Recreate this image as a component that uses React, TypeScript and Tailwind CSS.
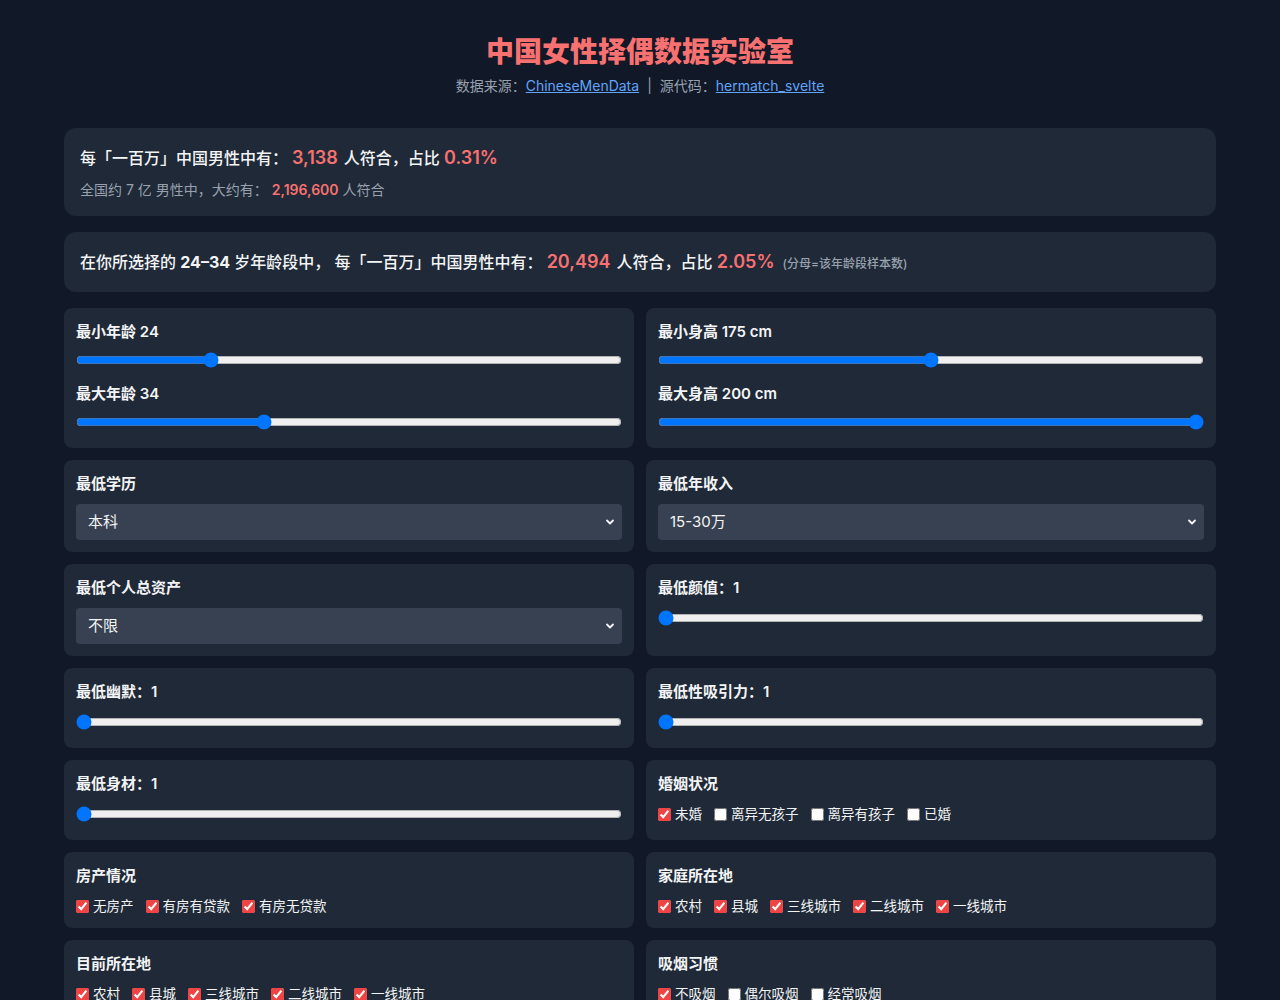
import { useState } from "react";

type Opt = { label: string; checked: boolean };

const Card = ({ children }: { children: React.ReactNode }) => (
  <div className="bg-[#1f2937] rounded-lg p-3">{children}</div>
);

const RangeField = ({
  label,
  value,
  min,
  max,
  onChange,
  tight = false,
}: {
  label: string;
  value: number;
  min: number;
  max: number;
  onChange: (v: number) => void;
  tight?: boolean;
}) => (
  <div>
    <div className="text-[15px] leading-6 font-semibold text-gray-100">{label}</div>
    <input
      type="range"
      min={min}
      max={max}
      value={value}
      onChange={(e) => onChange(Number(e.target.value))}
      className={`block w-full mx-0 mb-[6px] ${tight ? "mt-2" : "mt-2.5"}`}
    />
  </div>
);

const SelectField = ({ label, options, value }: { label: string; options: string[]; value: string }) => {
  const [v, setV] = useState(value);
  return (
    <div>
      <div className="text-[15px] leading-6 font-semibold text-gray-100">{label}</div>
      <div className="relative mt-2">
        <select
          value={v}
          onChange={(e) => setV(e.target.value)}
          className="appearance-none w-full h-9 bg-[#374151] rounded px-3 text-[15px] text-gray-100 outline-none"
        >
          {options.map((o) => (
            <option key={o}>{o}</option>
          ))}
        </select>
        <svg
          className="absolute right-[7px] top-1/2 -translate-y-1/2 pointer-events-none"
          width="10"
          height="10"
          viewBox="0 0 10 10"
        >
          <path d="M2 3.5 L5 6.5 L8 3.5" stroke="#f3f4f6" strokeWidth="1.8" fill="none" strokeLinecap="round" strokeLinejoin="round" />
        </svg>
      </div>
    </div>
  );
};

const CheckGroup = ({ label, options }: { label: string; options: Opt[] }) => {
  const [items, setItems] = useState(options);
  return (
    <div>
      <div className="text-[15px] leading-6 font-semibold text-gray-100">{label}</div>
      <div className="flex flex-wrap gap-x-3 gap-y-1 mt-2">
        {items.map((o, i) => (
          <label key={o.label} className="flex items-center gap-1 text-[13.5px] leading-5 text-gray-100">
            <input
              type="checkbox"
              checked={o.checked}
              onChange={() => setItems(items.map((it, j) => (j === i ? { ...it, checked: !it.checked } : it)))}
              className="m-0 w-[13px] h-[13px] accent-[#ef4444]"
            />
            {o.label}
          </label>
        ))}
      </div>
    </div>
  );
};

const cities = ["农村", "县城", "三线城市", "二线城市", "一线城市"];

export default function App() {
  const [minAge, setMinAge] = useState(24);
  const [maxAge, setMaxAge] = useState(34);
  const [minHeight, setMinHeight] = useState(175);
  const [maxHeight, setMaxHeight] = useState(200);
  const [looks, setLooks] = useState(1);
  const [humor, setHumor] = useState(1);
  const [appeal, setAppeal] = useState(1);
  const [body, setBody] = useState(1);

  return (
    <div className="min-h-screen bg-[#111827] text-gray-100 font-[Inter,'Noto_Sans_CJK_SC',sans-serif] pt-[34px] pb-12">
      <div className="max-w-6xl mx-auto">
        <header className="text-center">
          <h1 className="text-[28px] leading-9 font-extrabold text-[#f87171]">中国女性择偶数据实验室</h1>
          <p className="mt-1.5 text-sm leading-5 text-gray-400">
            数据来源：
            <a href="#" className="text-[#60a5fa] underline">
              ChineseMenData
            </a>
            <span className="mx-2">|</span>
            源代码：
            <a href="#" className="text-[#60a5fa] underline">
              hermatch_svelte
            </a>
          </p>
        </header>

        <div className="mt-8 bg-[#1f2937] rounded-xl px-4 py-4">
          <p className="text-base leading-7 font-medium text-gray-100">
            每「一百万」中国男性中有：
            <span className="ml-1 mr-1.5 text-lg font-semibold text-[#f87171]">3,138</span>
            人符合，占比 <span className="text-lg font-semibold text-[#f87171]">0.31%</span>
          </p>
          <p className="mt-2 text-sm leading-5 text-gray-400">
            全国约 7 亿 男性中，大约有：
            <span className="ml-1 mr-1 font-semibold text-[#f87171]">2,196,600</span>
            人符合
          </p>
        </div>

        <div className="mt-4 bg-[#1f2937] rounded-xl px-4 py-4">
          <p className="text-base leading-7 font-medium text-gray-100">
            在你所选择的 <span className="font-bold">24–34</span> 岁年龄段中， 每「一百万」中国男性中有：
            <span className="ml-1 mr-1.5 text-lg font-semibold text-[#f87171]">20,494</span>
            人符合，占比 <span className="text-lg font-semibold text-[#f87171]">2.05%</span>
            <span className="ml-2 text-xs text-gray-400">(分母=该年龄段样本数)</span>
          </p>
        </div>

        <div className="mt-4 grid grid-cols-2 gap-3">
          <Card>
            <div className="flex flex-col gap-2">
              <RangeField tight label={`最小年龄 ${minAge}`} value={minAge} min={0} max={100} onChange={setMinAge} />
              <RangeField tight label={`最大年龄 ${maxAge}`} value={maxAge} min={0} max={100} onChange={setMaxAge} />
            </div>
          </Card>
          <Card>
            <div className="flex flex-col gap-2">
              <RangeField tight label={`最小身高 ${minHeight} cm`} value={minHeight} min={150} max={200} onChange={setMinHeight} />
              <RangeField tight label={`最大身高 ${maxHeight} cm`} value={maxHeight} min={150} max={200} onChange={setMaxHeight} />
            </div>
          </Card>

          <Card>
            <SelectField label="最低学历" value="本科" options={["不限", "高中", "大专", "本科", "硕士", "博士"]} />
          </Card>
          <Card>
            <SelectField label="最低年收入" value="15-30万" options={["不限", "5万以下", "5-15万", "15-30万", "30-50万", "50万以上"]} />
          </Card>

          <Card>
            <SelectField label="最低个人总资产" value="不限" options={["不限", "50万", "100万", "500万", "1000万"]} />
          </Card>
          <Card>
            <RangeField label={`最低颜值：${looks}`} value={looks} min={1} max={10} onChange={setLooks} />
          </Card>

          <Card>
            <RangeField label={`最低幽默：${humor}`} value={humor} min={1} max={10} onChange={setHumor} />
          </Card>
          <Card>
            <RangeField label={`最低性吸引力：${appeal}`} value={appeal} min={1} max={10} onChange={setAppeal} />
          </Card>

          <Card>
            <RangeField label={`最低身材：${body}`} value={body} min={1} max={10} onChange={setBody} />
          </Card>
          <Card>
            <CheckGroup
              label="婚姻状况"
              options={[
                { label: "未婚", checked: true },
                { label: "离异无孩子", checked: false },
                { label: "离异有孩子", checked: false },
                { label: "已婚", checked: false },
              ]}
            />
          </Card>

          <Card>
            <CheckGroup
              label="房产情况"
              options={[
                { label: "无房产", checked: true },
                { label: "有房有贷款", checked: true },
                { label: "有房无贷款", checked: true },
              ]}
            />
          </Card>
          <Card>
            <CheckGroup label="家庭所在地" options={cities.map((c) => ({ label: c, checked: true }))} />
          </Card>

          <Card>
            <CheckGroup label="目前所在地" options={cities.map((c) => ({ label: c, checked: true }))} />
          </Card>
          <Card>
            <CheckGroup
              label="吸烟习惯"
              options={[
                { label: "不吸烟", checked: true },
                { label: "偶尔吸烟", checked: false },
                { label: "经常吸烟", checked: false },
              ]}
            />
          </Card>
        </div>
      </div>
    </div>
  );
}
